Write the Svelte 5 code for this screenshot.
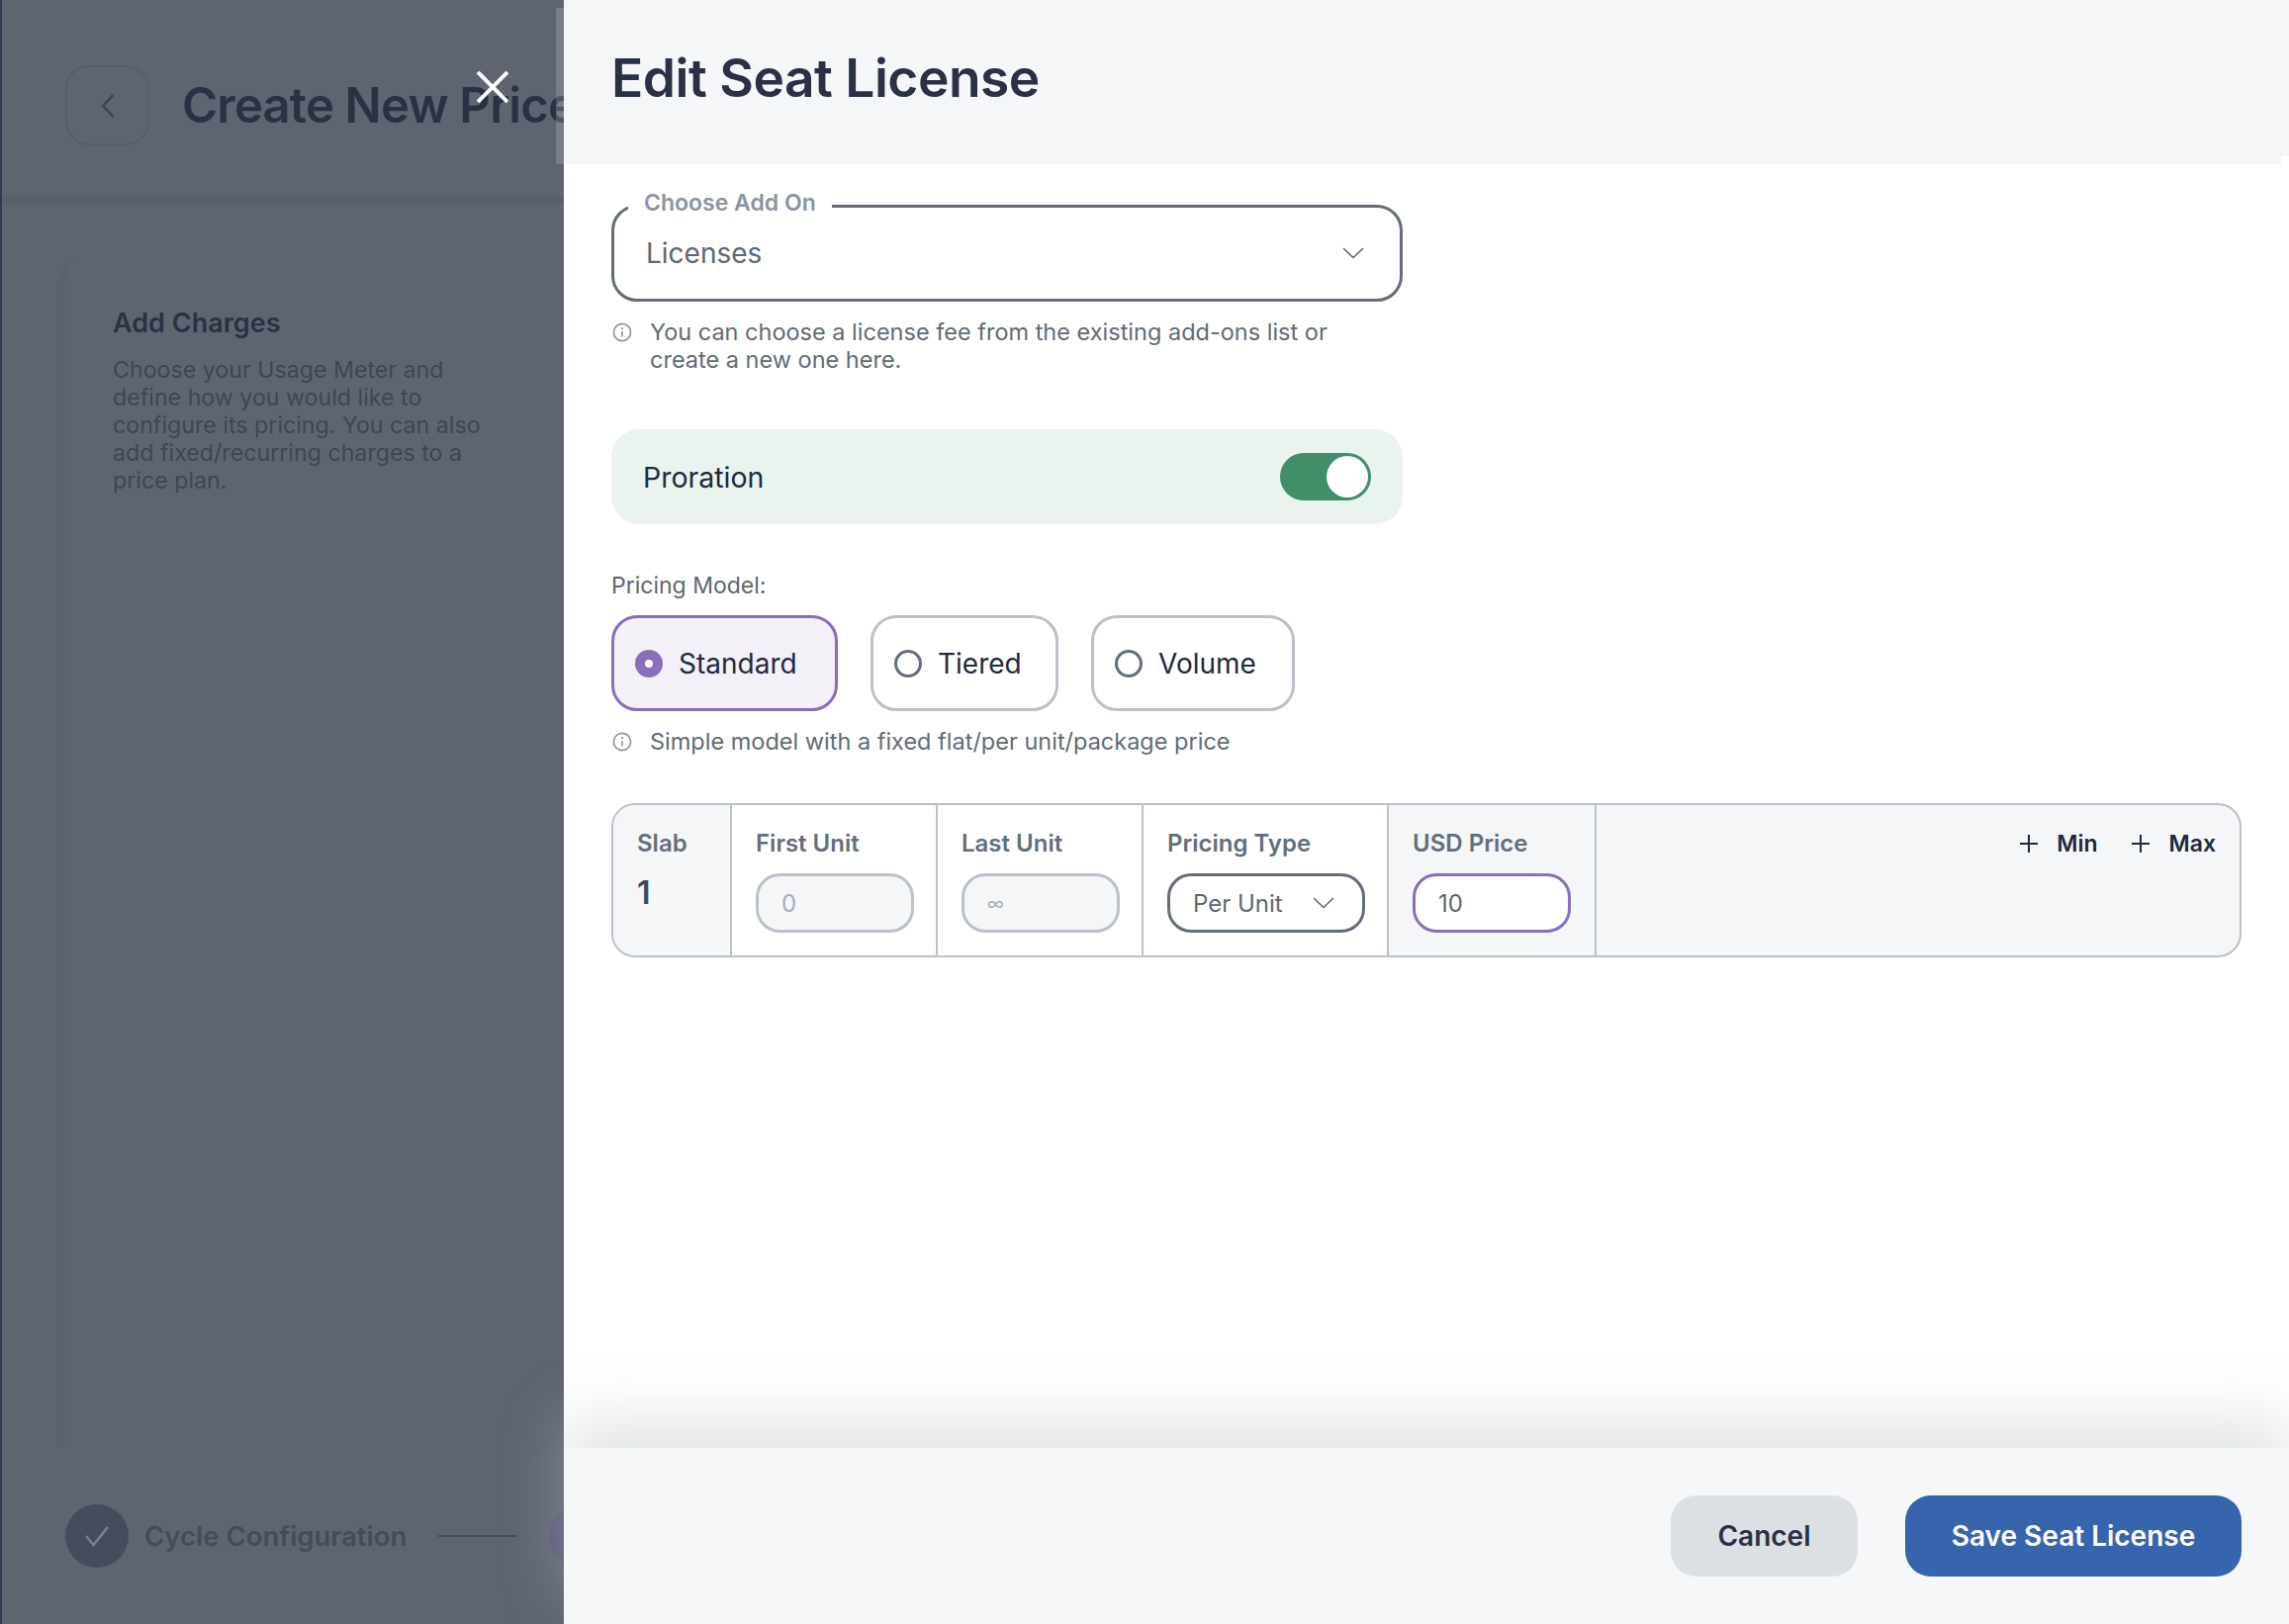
<script>
  let model = $state('standard');
  let prorate = $state(true);
  const models = [
    { id: 'standard', label: 'Standard' },
    { id: 'tiered', label: 'Tiered' },
    { id: 'volume', label: 'Volume' }
  ];
</script>

{#snippet chevron()}
  <svg class="chevron" width="22" height="12" viewBox="0 0 22 12" fill="none"><path d="M1.5 1.5 11 10.5l9.5-9" stroke="currentColor" stroke-width="1.6" stroke-linecap="round" stroke-linejoin="round"/></svg>
{/snippet}

{#snippet info()}
  <svg class="info" width="20" height="20" viewBox="0 0 20 20" fill="none"><circle cx="10" cy="10" r="8.6" stroke="#8a94a3" stroke-width="1.6"/><path d="M10 9v5.4" stroke="#8a94a3" stroke-width="1.6"/><circle cx="10" cy="6.2" r="1.1" fill="#8a94a3"/></svg>
{/snippet}

{#snippet plus()}
  <svg width="20" height="20" viewBox="0 0 20 20" fill="none"><path d="M10 1v18M1 10h18" stroke="#1f2a3c" stroke-width="2"/></svg>
{/snippet}

<div class="page">
  <div class="under">
    <header class="under-head">
      <div class="back">
        <svg width="16" height="26" viewBox="0 0 16 26" fill="none"><path d="M13.5 2 3 13l10.5 11" stroke="#3c4456" stroke-width="2.6"/></svg>
      </div>
      <h2>Create New Price</h2>
    </header>
    <div class="under-main">
      <section class="under-card">
        <h3>Add Charges</h3>
        <p>Choose your Usage Meter and define how you would like to configure its pricing. You can also add fixed/recurring charges to a price plan.</p>
      </section>
    </div>
    <footer class="steps">
      <span class="step-dot">
        <svg width="28" height="22" viewBox="0 0 28 22" fill="none"><path d="M3 11l7.5 9L25 2" stroke="#7c828c" stroke-width="2.4"/></svg>
      </span>
      <span class="step-name">Cycle Configuration</span>
      <span class="step-line"></span>
      <span class="step-dot next"></span>
    </footer>
  </div>

  <svg class="close" width="32" height="32" viewBox="0 0 32 32" fill="none"><path d="M1 1l30 30M31 1 1 31" stroke="#fff" stroke-width="4"/></svg>

  <aside class="drawer">
    <header class="drawer-head">
      <h1>Edit Seat License</h1>
    </header>

    <div class="drawer-body">
      <div class="narrow">
        <div class="select">
          <span class="legend">Choose Add On</span>
          <span>Licenses</span>
          {@render chevron()}
        </div>
        <div class="hint">
          {@render info()}
          <span>You can choose a license fee from the existing add-ons list or create a new one here.</span>
        </div>

        <div class="proration">
          <span>Proration</span>
          <button class="toggle" class:on={prorate} onclick={() => (prorate = !prorate)} aria-label="Proration"></button>
        </div>

        <div class="model-label">Pricing Model:</div>
        <div class="models">
          {#each models as m}
            <button class="model model-{m.id}" class:active={model === m.id} onclick={() => (model = m.id)}>
              <span class="radio"></span>
              {m.label}
            </button>
          {/each}
        </div>
        <div class="hint model-hint">
          {@render info()}
          <span>Simple model with a fixed flat/per unit/package price</span>
        </div>
      </div>

      <div class="slabs">
        <div class="cell slab">
          <div class="head">Slab</div>
          <div class="slab-no">1</div>
        </div>
        <div class="cell unit">
          <div class="head">First Unit</div>
          <div class="field disabled">0</div>
        </div>
        <div class="cell unit">
          <div class="head">Last Unit</div>
          <div class="field disabled"><span class="inf">∞</span></div>
        </div>
        <div class="cell type">
          <div class="head">Pricing Type</div>
          <div class="field dropdown">Per Unit {@render chevron()}</div>
        </div>
        <div class="cell price">
          <div class="head">USD Price</div>
          <div class="field focus">10</div>
        </div>
        <div class="cell extras">
          <span class="extra">{@render plus()} Min</span>
          <span class="extra">{@render plus()} Max</span>
        </div>
      </div>
    </div>

    <footer class="drawer-foot">
      <button class="btn cancel">Cancel</button>
      <button class="btn save">Save Seat License</button>
    </footer>
  </aside>
</div>

<style>
  :global(body) {
    margin: 0;
    background: #5f6570;
  }

  .page {
    position: relative;
    width: 2314px;
    height: 1642px;
    overflow: hidden;
    font-family: Inter, 'Liberation Sans', sans-serif;
    background: #5f6570;
  }

  button {
    font-family: inherit;
    cursor: pointer;
  }

  h1, h2, h3, p {
    margin: 0;
  }

  /* dimmed page behind the drawer */
  .under {
    height: 100%;
    display: flex;
    flex-direction: column;
    border-left: 2px solid #2f3a55;
    box-sizing: border-box;
  }

  .under-head {
    height: 206px;
    flex: none;
    display: flex;
    align-items: flex-start;
    gap: 33px;
    padding: 66px 0 0 64px;
    box-sizing: border-box;
    border-bottom: 8px solid #5a606b;
    white-space: nowrap;
  }

  .back {
    width: 85px;
    height: 81px;
    box-sizing: border-box;
    border: 2px solid #575d6a;
    border-radius: 24px;
    display: flex;
    align-items: center;
    justify-content: center;
  }

  .under-head h2 {
    font-size: 49px;
    line-height: 81px;
    font-weight: 600;
    color: #2a3144;
    letter-spacing: -0.8px;
  }

  .under-main {
    flex: 1;
    padding: 56px 0 0 56px;
    min-height: 0;
  }

  .under-card {
    height: 100%;
    box-sizing: border-box;
    padding: 49px 0 0 48px;
    border-left: 8px solid #5c626d;
    border-radius: 24px 0 0 0;
    width: 510px;
  }

  .under-card h3 {
    font-size: 27px;
    line-height: 32px;
    font-weight: 600;
    color: #2a3144;
    margin-bottom: 17px;
  }

  .under-card p {
    font-size: 23.2px;
    line-height: 28px;
    color: #3e4556;
    width: 385px;
  }

  .steps {
    height: 178px;
    flex: none;
    display: flex;
    align-items: center;
    padding-left: 64px;
    gap: 16px;
    box-sizing: border-box;
  }

  .step-dot {
    width: 64px;
    height: 64px;
    flex: none;
    border-radius: 50%;
    background: #454c5e;
    display: flex;
    align-items: center;
    justify-content: center;
  }

  .step-dot.next {
    background: #5a5a7a;
    margin-left: 16px;
  }

  .step-name {
    font-size: 27.5px;
    font-weight: 600;
    color: #444b5c;
    white-space: nowrap;
  }

  .step-line {
    width: 80px;
    height: 2px;
    flex: none;
    background: #454c5e;
    margin-left: 16px;
  }

  .close {
    position: absolute;
    left: 482px;
    top: 72px;
    z-index: 2;
  }

  /* drawer */
  .drawer {
    position: absolute;
    top: 0;
    left: 570px;
    right: 0;
    bottom: 0;
    background: #fff;
    display: flex;
    flex-direction: column;
    color: #1f2a3c;
  }

  .drawer-head {
    height: 158px;
    flex: none;
    box-sizing: border-box;
    padding: 0 0 2px 48px;
    display: flex;
    align-items: center;
    background: #f5f6f8;
    box-shadow: -8px 8px 0 rgba(211, 214, 220, 0.22);
  }

  .drawer-head h1 {
    font-size: 53.3px;
    font-weight: 600;
    color: #2a3144;
    letter-spacing: -0.5px;
  }

  .drawer-body {
    flex: 1;
    min-height: 0;
    padding: 49px 48px 0 48px;
  }

  .narrow {
    width: 800px;
  }

  .select {
    position: relative;
    height: 98px;
    box-sizing: border-box;
    border: 3px solid #636e7b;
    border-radius: 26px;
    padding: 0 36px 0 32px;
    display: flex;
    align-items: center;
    justify-content: space-between;
    font-size: 28px;
    color: #5d6773;
  }

  .legend {
    position: absolute;
    left: 14px;
    top: -19px;
    padding: 0 16px;
    background: #fff;
    font-size: 23px;
    line-height: 28px;
    font-weight: 600;
    color: #8a94a3;
  }

  .chevron {
    flex: none;
  }

  .hint {
    display: flex;
    gap: 18px;
    margin-top: 17px;
    padding-left: 1px;
    font-size: 23.5px;
    line-height: 28px;
    color: #616b78;
  }

  .info {
    flex: none;
    margin-top: 4px;
  }

  .proration {
    margin-top: 56px;
    height: 96px;
    box-sizing: border-box;
    padding: 0 32px;
    border-radius: 28px;
    background: #eaf3ee;
    display: flex;
    align-items: center;
    justify-content: space-between;
    font-size: 28.5px;
  }

  .toggle {
    position: relative;
    width: 92px;
    height: 48px;
    padding: 0;
    border: none;
    border-radius: 24px;
    background: #bac1ca;
  }

  .toggle.on {
    background: #408f69;
  }

  .toggle::after {
    content: '';
    position: absolute;
    top: 3px;
    left: 3px;
    width: 42px;
    height: 42px;
    border-radius: 50%;
    background: #fff;
  }

  .toggle.on::after {
    left: 47px;
  }

  .model-label {
    margin-top: 46px;
    font-size: 23px;
    line-height: 32px;
    color: #5d6773;
  }

  .models {
    display: flex;
    gap: 33px;
    margin-top: 14px;
  }

  .model {
    height: 97px;
    box-sizing: border-box;
    padding: 0 0 0 21px;
    display: flex;
    align-items: center;
    gap: 16px;
    background: #fff;
    border: 3px solid #bac1ca;
    border-radius: 26px;
    font-size: 28px;
    color: #1f2a3c;
  }

  .model-standard {
    width: 229px;
  }

  .model-tiered {
    width: 190px;
  }

  .model-volume {
    width: 206px;
  }

  .model.active {
    background: #f3f0f8;
    border-color: #8a6dbb;
  }

  .radio {
    width: 28px;
    height: 28px;
    box-sizing: border-box;
    border: 3px solid #636e7b;
    border-radius: 50%;
    flex: none;
  }

  .active .radio {
    border: 10px solid #8a6dbb;
    background: #fff;
  }

  .model-hint {
    margin-top: 17px;
  }

  .slabs {
    margin-top: 48px;
    height: 156px;
    display: flex;
    box-sizing: border-box;
    border: 2.5px solid #bac1ca;
    border-radius: 24px;
    overflow: hidden;
    background: #f5f6f8;
  }

  .cell {
    box-sizing: border-box;
    padding: 24px 0 0 24px;
    border-right: 2.5px solid #bac1ca;
    background: #fff;
    flex: none;
  }

  .slab {
    width: 120px;
    background: #f5f6f8;
  }

  .unit {
    width: 208px;
  }

  .type {
    width: 248px;
  }

  .price {
    width: 210px;
    background: #f5f6f8;
  }

  .extras {
    flex: 1;
    background: none;
    border: none;
    padding: 24px 24px 0 0;
    display: flex;
    justify-content: flex-end;
    gap: 34px;
  }

  .head {
    font-size: 24px;
    line-height: 30px;
    font-weight: 600;
    color: #636e7b;
  }

  .slab-no {
    font-size: 32px;
    line-height: 40px;
    font-weight: 600;
    color: #3e4a5a;
    margin-top: 15px;
  }

  .field {
    margin-top: 15px;
    width: 160px;
    height: 60px;
    box-sizing: border-box;
    border: 3px solid #636e7b;
    border-radius: 24px;
    padding: 0 23px;
    display: flex;
    align-items: center;
    justify-content: space-between;
    font-size: 24px;
    color: #5d6773;
    background: #fff;
  }

  .disabled {
    background: #f5f6f8;
    border-color: #bac1ca;
    color: #a5adb8;
  }

  .inf {
    font-size: 18px;
  }

  .dropdown {
    width: 200px;
    padding-right: 28px;
  }

  .focus {
    border-color: #8a6dbb;
  }

  .extra {
    display: flex;
    align-items: center;
    gap: 18px;
    height: 30px;
    font-size: 23px;
    font-weight: 600;
    color: #1f2a3c;
  }

  .drawer-foot {
    height: 178px;
    flex: none;
    box-sizing: border-box;
    padding: 0 48px 0 0;
    display: flex;
    align-items: center;
    justify-content: flex-end;
    gap: 48px;
    background: #f6f7f9;
    box-shadow: 0 -30px 60px rgba(185, 192, 198, 0.42);
  }

  .btn {
    height: 82px;
    border: none;
    border-radius: 26px;
    font-size: 28px;
    font-weight: 600;
  }

  .cancel {
    width: 189px;
    background: #dce0e4;
    color: #2a3144;
  }

  .save {
    width: 340px;
    background: #3665ae;
    color: #fff;
  }
</style>
